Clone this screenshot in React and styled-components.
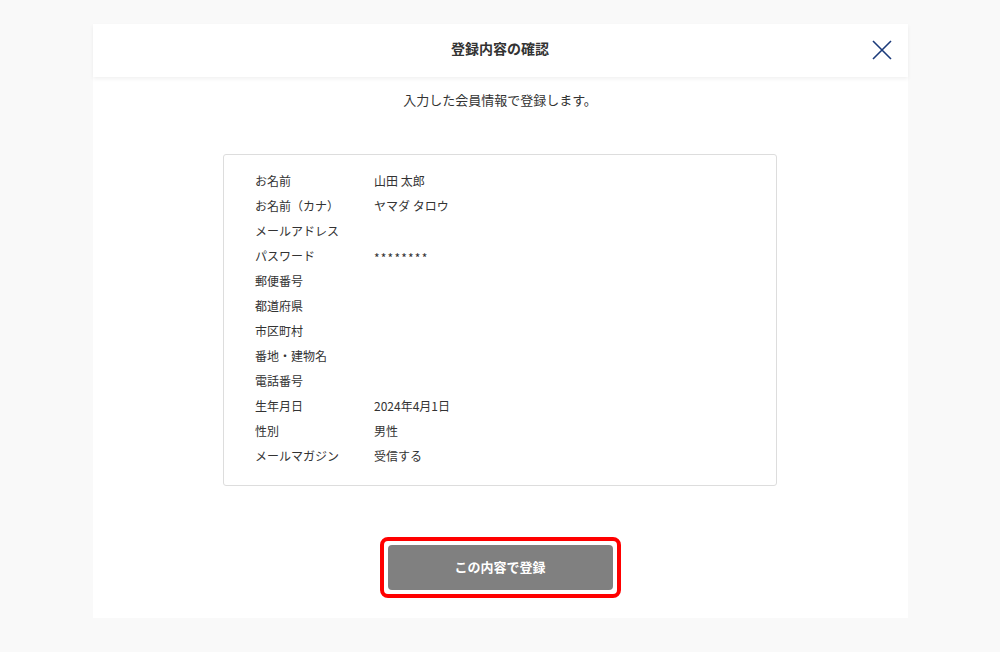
import React from 'react'
import styled, { createGlobalStyle } from 'styled-components'

const GlobalStyle = createGlobalStyle`
  body {
    margin: 0;
    background: #f9f9f9;
    font-family: "Noto Sans CJK JP", "Noto Sans", sans-serif;
    color: #333;
  }
`

const Modal = styled.div`
  width: 815px;
  margin: 24px auto 0;
  background: #fff;
  padding-bottom: 28px;
`

const Header = styled.div`
  position: relative;
  height: 53px;
  box-sizing: border-box;
  padding-bottom: 5px;
  display: flex;
  align-items: center;
  justify-content: center;
  box-shadow: 0 2px 4px rgba(0, 0, 0, 0.06);

  h2 {
    margin: 0;
    font-size: 14px;
    font-weight: bold;
    color: #333;
  }
`

const CloseButton = styled.button`
  position: absolute;
  right: 14px;
  top: 14px;
  width: 24px;
  height: 24px;
  padding: 0;
  border: none;
  background: none;
  cursor: pointer;
  display: flex;
  align-items: center;
  justify-content: center;
`

const Body = styled.div`
  padding-top: 12px;
  display: flex;
  flex-direction: column;
  align-items: center;
`

const Lead = styled.p`
  margin: 0;
  font-size: 13px;
  line-height: 22px;
  color: #333;
`

const Card = styled.dl`
  width: 554px;
  box-sizing: border-box;
  margin: 43px 0 0;
  padding: 13px 31px 17px;
  border: 1px solid #ddd;
  border-radius: 3px;
  display: grid;
  grid-template-columns: 119px 1fr;
  grid-auto-rows: 25px;
  font-size: 12px;
  color: #333;

  dt {
    margin: 0;
    display: flex;
    align-items: center;
    padding-bottom: 1px;
  }
`

const Value = styled.dd`
  margin: 0;
  display: flex;
  align-items: center;
  padding-bottom: 1px;
  letter-spacing: ${(p) => (p.$masked ? '1.2px' : 'normal')};
  padding-top: ${(p) => (p.$masked ? '4px' : '0')};
`

const ButtonWrap = styled.div`
  position: relative;
  margin-top: 59px;

  &::after {
    content: '';
    position: absolute;
    inset: -8px;
    border: 4px solid #f00;
    border-radius: 8px;
    pointer-events: none;
  }
`

const SubmitButton = styled.button`
  width: 225px;
  height: 45px;
  padding: 0 0 3px;
  border: none;
  border-radius: 4px;
  background: #808080;
  color: #fff;
  font-family: inherit;
  font-size: 13px;
  font-weight: bold;
  cursor: pointer;
`

const rows = [
  ['お名前', '山田 太郎'],
  ['お名前（カナ）', 'ヤマダ タロウ'],
  ['メールアドレス', ''],
  ['パスワード', '********', true],
  ['郵便番号', ''],
  ['都道府県', ''],
  ['市区町村', ''],
  ['番地・建物名', ''],
  ['電話番号', ''],
  ['生年月日', '2024年4月1日'],
  ['性別', '男性'],
  ['メールマガジン', '受信する'],
]

export default function App() {
  return (
    <>
      <GlobalStyle />
      <Modal>
        <Header>
          <h2>登録内容の確認</h2>
          <CloseButton aria-label="閉じる">
            <svg width="20" height="20" viewBox="0 0 20 20">
              <path d="M1 1L19 19M19 1L1 19" stroke="#1b3a7a" strokeWidth="1.6" fill="none" />
            </svg>
          </CloseButton>
        </Header>
        <Body>
          <Lead>入力した会員情報で登録します。</Lead>
          <Card>
            {rows.map(([label, value, masked]) => (
              <React.Fragment key={label}>
                <dt>{label}</dt>
                <Value $masked={masked}>{value}</Value>
              </React.Fragment>
            ))}
          </Card>
          <ButtonWrap>
            <SubmitButton>この内容で登録</SubmitButton>
          </ButtonWrap>
        </Body>
      </Modal>
    </>
  )
}
